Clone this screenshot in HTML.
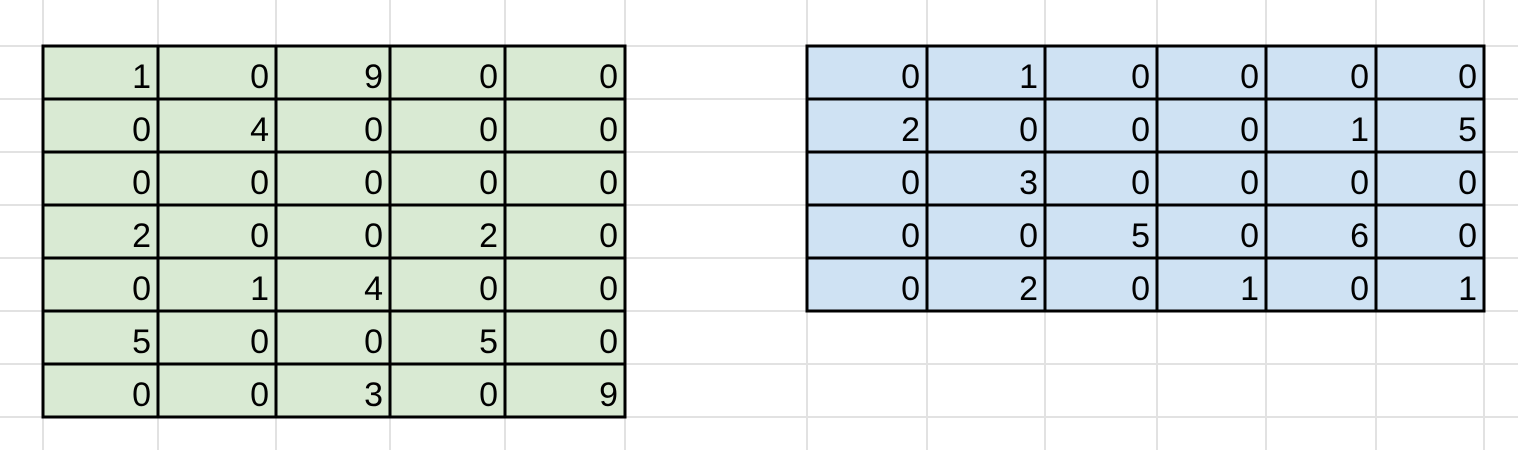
<!DOCTYPE html>
<html><head><style>
html,body{margin:0;padding:0;background:#fff;width:1518px;height:450px;overflow:hidden}
text{font-family:"Liberation Sans",Arial,sans-serif;font-size:34px;fill:#000;text-anchor:end}
</style></head><body>
<svg width="1518" height="450" xmlns="http://www.w3.org/2000/svg" id="s"></svg>
<script>
const s=document.getElementById('s');const NS='http://www.w3.org/2000/svg';
function el(t,a,txt){const e=document.createElementNS(NS,t);for(const k in a)e.setAttribute(k,a[k]);if(txt!==undefined)e.textContent=txt;s.appendChild(e);return e;}
const xs=[43,158,276,390,505,625,807,927,1045,1157,1266,1376,1484];
const ys=[46,99,152,205,258,311,364,417];
// gray grid
for(const x of xs) el('rect',{x:x-1,y:0,width:2,height:450,fill:'#e2e2e2'});
for(const y of ys) el('rect',{x:0,y:y-1,width:1518,height:2,fill:'#e2e2e2'});
function table(cx,ry,fill,data){
  el('rect',{x:cx[0],y:ry[0],width:cx[cx.length-1]-cx[0],height:ry[ry.length-1]-ry[0],fill:fill});
  for(let r=0;r<data.length;r++)for(let c=0;c<data[r].length;c++)
    el('text',{x:cx[c+1]-7,y:ry[r]+42},data[r][c]);
  for(const x of cx) el('rect',{x:x-1.5,y:ry[0]-1.5,width:3,height:ry[ry.length-1]-ry[0]+3,fill:'#000'});
  for(const y of ry) el('rect',{x:cx[0]-1.5,y:y-1.5,width:cx[cx.length-1]-cx[0]+3,height:3,fill:'#000'});
}
table([43,158,276,390,505,625],ys,'#d9ead3',[
[1,0,9,0,0],[0,4,0,0,0],[0,0,0,0,0],[2,0,0,2,0],[0,1,4,0,0],[5,0,0,5,0],[0,0,3,0,9]]);
table([807,927,1045,1157,1266,1376,1484],[46,99,152,205,258,311],'#cfe2f3',[
[0,1,0,0,0,0],[2,0,0,0,1,5],[0,3,0,0,0,0],[0,0,5,0,6,0],[0,2,0,1,0,1]]);
</script>
</body></html>
